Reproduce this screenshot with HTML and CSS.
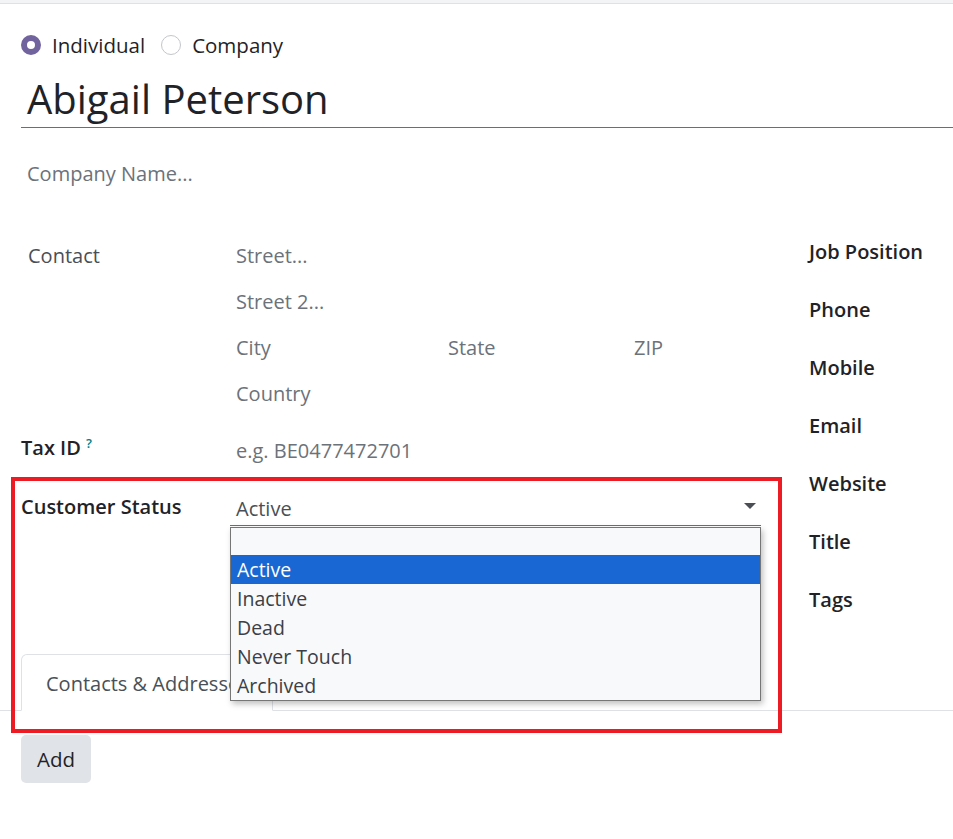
FILE: index.html
```html
<!DOCTYPE html>
<html>
<head>
<meta charset="utf-8">
<link rel="stylesheet" href="styles.css">
</head>
<body>
<div class="topbar"></div>
<div class="sheet">
  <div class="radios">
    <label class="radio"><span class="dot checked"></span>Individual</label>
    <label class="radio"><span class="dot"></span>Company</label>
  </div>
  <div class="name">Abigail Peterson</div>
  <div class="company-name">Company Name...</div>

  <div class="groups">
    <div class="left">
      <div class="row addr">
        <div class="lbl plain">Contact</div>
        <div class="fields">
          <div class="line ph">Street...</div>
          <div class="line ph">Street 2...</div>
          <div class="line ph tri"><span>City</span><span>State</span><span>ZIP</span></div>
          <div class="line ph">Country</div>
        </div>
      </div>
      <div class="row tax">
        <div class="lbl bold">Tax ID <sup class="help">?</sup></div>
        <div class="val ph">e.g. BE0477472701</div>
      </div>
      <div class="row status">
        <div class="lbl bold">Customer Status</div>
        <div class="select">
          <span>Active</span>
          <span class="caret"></span>
        </div>
      </div>
    </div>
    <div class="right">
      <div class="rlbl">Job Position</div>
      <div class="rlbl">Phone</div>
      <div class="rlbl">Mobile</div>
      <div class="rlbl">Email</div>
      <div class="rlbl">Website</div>
      <div class="rlbl">Title</div>
      <div class="rlbl">Tags</div>
    </div>
  </div>
</div>

<div class="notebook">
  <div class="tab">Contacts &amp; Addresses</div>
  <div class="tabline"></div>
</div>
<div class="sheet">
  <button class="add">Add</button>
</div>

<ul class="options">
  <li class="empty"></li>
  <li class="sel">Active</li>
  <li>Inactive</li>
  <li>Dead</li>
  <li>Never Touch</li>
  <li>Archived</li>
</ul>
<div class="highlight"></div>
</body>
</html>
```
FILE: styles.css
```css
html, body {
  margin: 0;
  padding: 0;
  background: #fff;
  font-family: "Open Sans", "Noto Sans", sans-serif;
  color: #212529;
  overflow: hidden;
}
body {
  width: 953px;
  height: 839px;
  position: relative;
}
.topbar {
  height: 3px;
  background: #f3f4f6;
  border-bottom: 1px solid #dee2e6;
}
.sheet {
  padding-left: 21px;
}
.radios {
  display: flex;
  align-items: center;
  gap: 16px;
  margin-top: 30px;
  height: 22px;
  font-size: 20.5px;
  font-weight: 500;
  color: #1f2328;
}
.radio {
  display: flex;
  align-items: center;
  gap: 11px;
}
.dot {
  width: 20px;
  height: 20px;
  border-radius: 50%;
  border: 1px solid #c4c6c9;
  box-sizing: border-box;
  background: #fff;
}
.dot.checked {
  border: 6px solid #71639e;
  background: #fff;
}
.name {
  margin-top: 9px;
  padding-top: 6px;
  font-size: 40px;
  line-height: 56px;
  padding-left: 6px;
  color: #1f2328;
  border-bottom: 1px solid #71639e;
}
.company-name {
  margin-top: 20px;
  padding-left: 6px;
  font-size: 20px;
  line-height: 52px;
  color: #6c727a;
}
.groups {
  display: flex;
  margin-top: 33px;
}
.left {
  width: 740px;
  display: flex;
  flex-direction: column;
}
.row {
  display: flex;
}
.lbl {
  width: 215px;
  flex: none;
  font-size: 20px;
}
.lbl.plain {
  padding-left: 7px;
  box-sizing: border-box;
  line-height: 46px;
  color: #4a4f55;
}
.lbl.bold {
  font-weight: 600;
  color: #1f2328;
}
.fields {
  flex: 1;
}
.line {
  height: 46px;
  line-height: 46px;
  font-size: 20px;
}
.ph {
  color: #6c727a;
}
.tri {
  display: flex;
}
.tri span:nth-child(1) { width: 212px; }
.tri span:nth-child(2) { width: 186px; }
.tax {
  margin-top: 10px;
  height: 46px;
  align-items: center;
}
.tax .lbl {
  margin-top: -6px;
}
.help {
  color: #017e84;
  font-size: 13px;
  font-weight: 600;
  vertical-align: 7px;
  line-height: 0;
}
.val {
  font-size: 20px;
}
.status {
  margin-top: 14px;
  align-items: flex-start;
}
.status .lbl {
  line-height: 40px;
}
.select {
  margin-left: -6px;
  width: 531px;
  height: 39px;
  box-sizing: border-box;
  padding: 5px 6px 0;
  display: flex;
  align-items: center;
  justify-content: space-between;
  font-size: 20px;
  color: #4a4f55;
  border-bottom: 1px solid #71639e;
}
.caret {
  width: 0;
  height: 0;
  border-left: 6px solid transparent;
  border-right: 6px solid transparent;
  border-top: 6px solid #4a4f55;
  margin-right: -1px;
  margin-top: -5px;
}
.right {
  padding-left: 48px;
  margin-top: -10px;
}
.rlbl {
  height: 58px;
  line-height: 58px;
  font-size: 20px;
  font-weight: 600;
  color: #1f2328;
}
.notebook {
  display: flex;
  align-items: flex-end;
  margin-top: 24px;
  padding-left: 21px;
  border-bottom: 1px solid #dee2e6;
  height: 57px;
}
.tab {
  width: 252px;
  height: 57px;
  box-sizing: border-box;
  border: 1px solid #dee2e6;
  border-bottom: 1px solid #fff;
  margin-bottom: -1px;
  border-radius: 6px 6px 0 0;
  padding-left: 24px;
  line-height: 58px;
  font-size: 20px;
  color: #495057;
  white-space: nowrap;
  overflow: hidden;
}
.tabline { flex: 1; }
.add {
  margin-top: 24px;
  width: 70px;
  height: 48px;
  border: none;
  border-radius: 5px;
  background: #e0e3e7;
  font-family: inherit;
  font-size: 20.5px;
  font-weight: 500;
  color: #1f2328;
  padding: 0;
}
.options {
  position: absolute;
  left: 230px;
  top: 527px;
  width: 531px;
  height: 174px;
  margin: 0;
  padding: 0;
  list-style: none;
  background: #f8f9fa;
  border: 1px solid #767676;
  box-sizing: border-box;
  box-shadow: 2px 3px 6px rgba(0,0,0,0.25);
  font-size: 19.5px;
  color: #3b4047;
}
.options li {
  height: 29px;
  line-height: 29px;
  padding-left: 6px;
}
.options li.empty { height: 27px; }
.options li.sel {
  background: #1967d2;
  color: #fff;
}
.highlight {
  position: absolute;
  left: 11px;
  top: 477px;
  width: 771px;
  height: 256px;
  box-sizing: border-box;
  border: 4px solid #ed1c24;
  pointer-events: none;
}
```
